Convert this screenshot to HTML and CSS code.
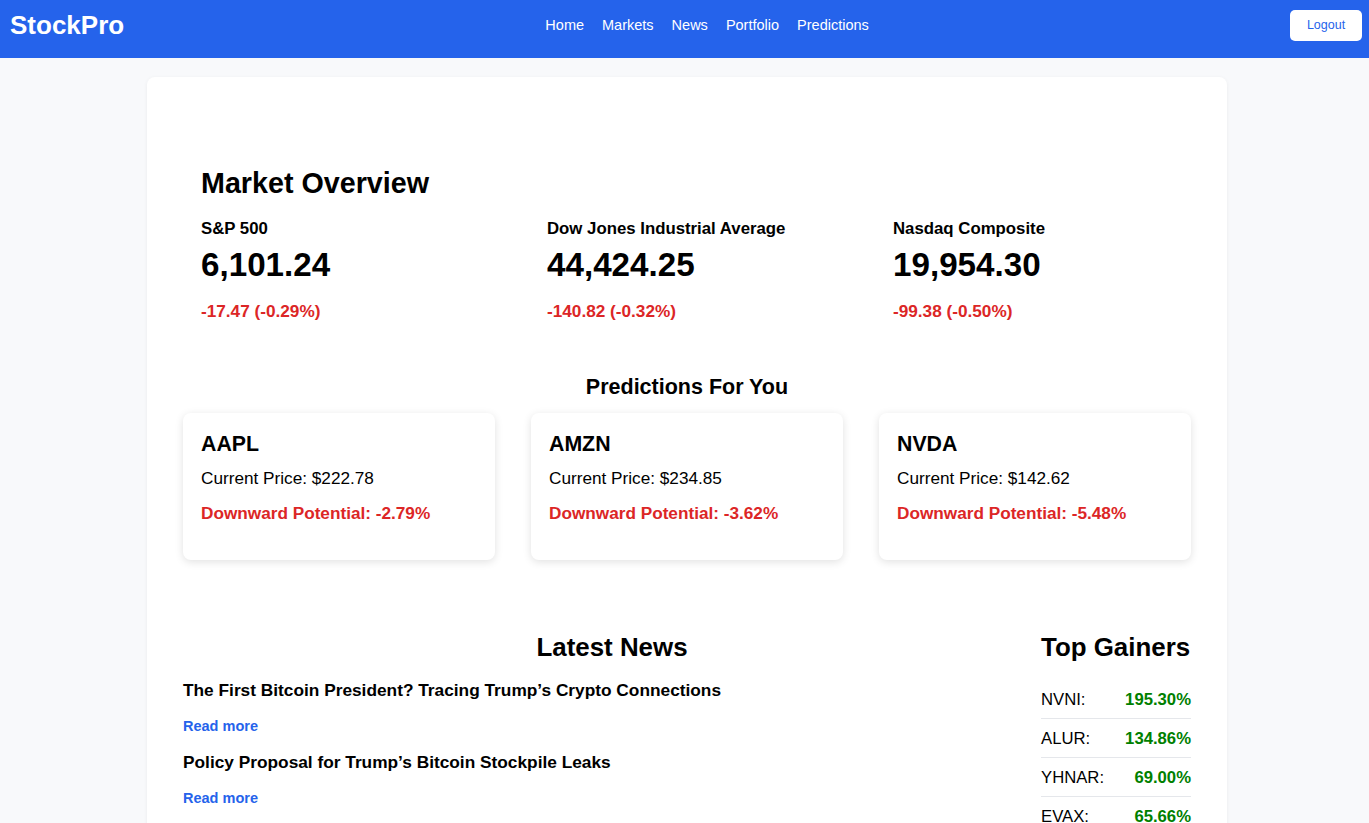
FILE: index.html
```html
<!DOCTYPE html>
<html lang="en">
<head>
<meta charset="utf-8">
<title>StockPro</title>
<link rel="stylesheet" href="styles.css">
</head>
<body>
<header class="topbar">
  <div class="logo">StockPro</div>
  <nav class="nav">
    <a href="#">Home</a>
    <a href="#">Markets</a>
    <a href="#">News</a>
    <a href="#">Portfolio</a>
    <a href="#">Predictions</a>
  </nav>
  <button class="logout">Logout</button>
</header>

<main class="panel">
  <section class="market">
    <h2 class="market-title">Market Overview</h2>
    <div class="indices">
      <div class="index">
        <div class="index-name">S&amp;P 500</div>
        <div class="index-value">6,101.24</div>
        <div class="index-change">-17.47 (-0.29%)</div>
      </div>
      <div class="index">
        <div class="index-name">Dow Jones Industrial Average</div>
        <div class="index-value">44,424.25</div>
        <div class="index-change">-140.82 (-0.32%)</div>
      </div>
      <div class="index">
        <div class="index-name">Nasdaq Composite</div>
        <div class="index-value">19,954.30</div>
        <div class="index-change">-99.38 (-0.50%)</div>
      </div>
    </div>
  </section>

  <section class="predictions">
    <h3 class="section-title">Predictions For You</h3>
    <div class="pred-grid">
      <div class="pred-card">
        <div class="ticker">AAPL</div>
        <div class="price">Current Price: $222.78</div>
        <div class="potential">Downward Potential: -2.79%</div>
      </div>
      <div class="pred-card">
        <div class="ticker">AMZN</div>
        <div class="price">Current Price: $234.85</div>
        <div class="potential">Downward Potential: -3.62%</div>
      </div>
      <div class="pred-card">
        <div class="ticker">NVDA</div>
        <div class="price">Current Price: $142.62</div>
        <div class="potential">Downward Potential: -5.48%</div>
      </div>
    </div>
  </section>

  <section class="bottom">
    <div class="news">
      <h2 class="big-title center">Latest News</h2>
      <div class="news-list">
        <div class="news-item">
          <div class="news-title">The First Bitcoin President? Tracing Trump’s Crypto Connections</div>
          <a class="read-more" href="#">Read more</a>
        </div>
        <div class="news-item">
          <div class="news-title">Policy Proposal for Trump’s Bitcoin Stockpile Leaks</div>
          <a class="read-more" href="#">Read more</a>
        </div>
      </div>
    </div>
    <aside class="gainers">
      <h2 class="big-title">Top Gainers</h2>
      <div class="gainer"><span>NVNI:</span><span class="gain">195.30%</span></div>
      <div class="gainer"><span>ALUR:</span><span class="gain">134.86%</span></div>
      <div class="gainer"><span>YHNAR:</span><span class="gain">69.00%</span></div>
      <div class="gainer"><span>EVAX:</span><span class="gain">65.66%</span></div>
    </aside>
  </section>
</main>
</body>
</html>
```

FILE: styles.css
```css
* { box-sizing: border-box; }

body {
  margin: 0;
  background: #f8f9fb;
  font-family: "Liberation Sans", Arial, Helvetica, sans-serif;
  color: #000;
}

.topbar {
  height: 58px;
  background: #2563eb;
  display: flex;
  align-items: center;
  justify-content: space-between;
  padding: 0 7px 0 10px;
}

.logo {
  color: #fff;
  font-weight: 700;
  font-size: 26px;
  line-height: 30px;
  margin-top: -8px;
}

.nav {
  display: flex;
  gap: 18px;
  margin-top: -8px;
}

.nav a {
  color: #fff;
  text-decoration: none;
  font-size: 14.5px;
  line-height: 18px;
}

.logout {
  width: 72px;
  height: 31px;
  background: #fff;
  color: #2563eb;
  border: none;
  border-radius: 5px;
  font-family: "Liberation Sans", Arial, sans-serif;
  font-size: 12.5px;
  margin-top: -8px;
  padding: 0;
}

.panel {
  width: 1080px;
  margin: 19px 0 0 147px;
  background: #fff;
  border-radius: 8px;
  box-shadow: 0 1px 4px rgba(0, 0, 0, 0.06);
  padding: 36px 36px 40px;
  min-height: 800px;
}

.market {
  padding: 53px 18px 0;
}

.market-title {
  margin: 0;
  font-size: 28.7px;
  line-height: 34px;
  font-weight: 700;
}

.indices {
  display: grid;
  grid-template-columns: 346px 346px 1fr;
  margin-top: 19px;
}

.index-name {
  font-size: 16.8px;
  line-height: 20px;
  font-weight: 700;
}

.index-value {
  font-size: 33.2px;
  line-height: 38px;
  font-weight: 700;
  margin-top: 7px;
}

.index-change {
  font-size: 17.2px;
  line-height: 20px;
  font-weight: 700;
  color: #dc2626;
  margin-top: 17px;
}

.predictions {
  margin-top: 53px;
}

.section-title {
  margin: 0;
  text-align: center;
  font-size: 21.5px;
  line-height: 26px;
  font-weight: 700;
}

.pred-grid {
  display: grid;
  grid-template-columns: repeat(3, 1fr);
  gap: 36px;
  margin-top: 13px;
}

.pred-card {
  height: 147px;
  border-radius: 8px;
  box-shadow: 0 2px 8px rgba(0, 0, 0, 0.12);
  padding: 19px 18px 0;
}

.ticker {
  font-size: 21.3px;
  line-height: 24px;
  font-weight: 700;
}

.price {
  font-size: 17.2px;
  line-height: 20px;
  margin-top: 12px;
}

.potential {
  font-size: 17.2px;
  line-height: 20px;
  font-weight: 700;
  color: #dc2626;
  margin-top: 15px;
}

.bottom {
  display: flex;
  margin-top: 72px;
}

.news {
  flex: 1;
}

.big-title {
  margin: 0;
  font-size: 25.9px;
  line-height: 30px;
  font-weight: 700;
}

.center { text-align: center; }

.news-list {
  display: flex;
  flex-direction: column;
  gap: 17px;
  margin-top: 18px;
}

.news-title {
  font-size: 17.3px;
  line-height: 20px;
  font-weight: 700;
}

.read-more {
  display: block;
  margin-top: 17px;
  font-size: 14.5px;
  line-height: 18px;
  font-weight: 700;
  color: #2563eb;
  text-decoration: none;
}

.gainers {
  width: 150px;
}

.gainers .big-title {
  margin-bottom: 18px;
}

.gainer {
  display: flex;
  justify-content: space-between;
  align-items: center;
  height: 39px;
  border-bottom: 1px solid #e5e7eb;
  font-size: 16.7px;
  padding-top: 1px;
}

.gain {
  color: #008000;
  font-weight: 700;
}
```
